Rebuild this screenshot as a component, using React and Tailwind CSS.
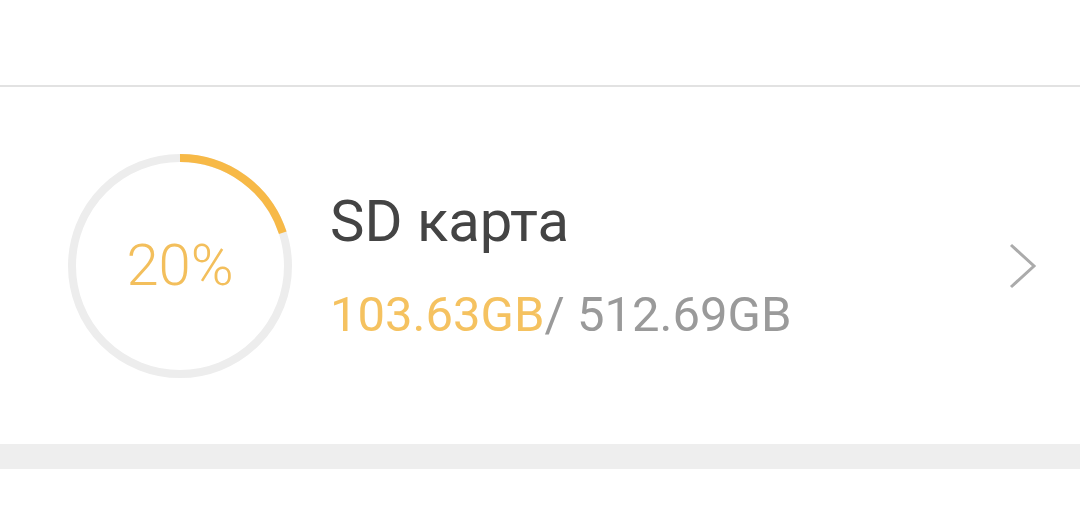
export default function App() {
  const r = 108;
  const c = 2 * Math.PI * r;
  const pct = 0.2;

  return (
    <div className="h-[529px] w-[1080px] bg-white font-['Roboto',sans-serif]">
      <div className="h-[87px] border-b-2 border-[#e2e2e2]" />
      <div className="flex h-[357px] items-center pl-[68px] pr-[40px]">
        <div className="relative h-[224px] w-[224px] shrink-0">
          <svg width="224" height="224" viewBox="0 0 224 224">
            <circle cx="112" cy="112" r={r} fill="none" stroke="#ededed" strokeWidth="8" />
            <circle
              cx="112"
              cy="112"
              r={r}
              fill="none"
              stroke="#f7b947"
              strokeWidth="8"
              strokeDasharray={`${c * pct} ${c}`}
              transform="rotate(-90 112 112)"
            />
          </svg>
          <div className="absolute inset-0 flex items-center justify-center text-[58px] font-light text-[#f3bf5c]">
            20%
          </div>
        </div>
        <div className="ml-[38px] flex flex-1 flex-col">
          <div className="text-[58px] leading-[64px] text-[#444444]">SD карта</div>
          <div className="mt-[34px] text-[49px] leading-[56px] text-[#9a9a9a]">
            <span className="text-[#f5c260]">103.63GB</span>/ 512.69GB
          </div>
        </div>
        <svg width="34" height="56" viewBox="0 0 34 56" className="shrink-0">
          <path d="M5 7 L28 28 L5 49" fill="none" stroke="#ababab" strokeWidth="3" />
        </svg>
      </div>
      <div className="h-[25px] bg-[#eeeeee]" />
    </div>
  );
}
